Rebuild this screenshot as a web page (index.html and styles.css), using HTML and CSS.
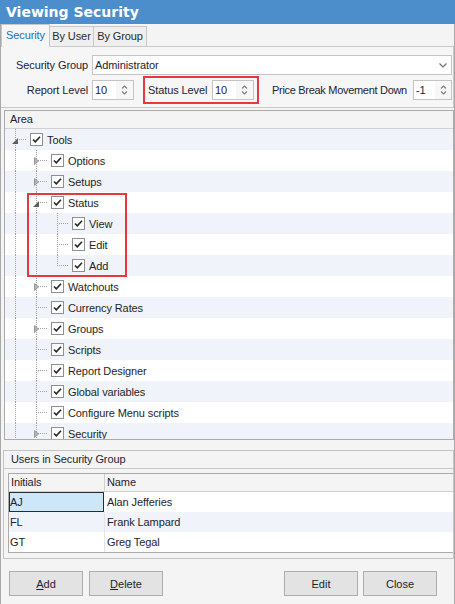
FILE: index.html
```html
<!DOCTYPE html>
<html>
<head>
<meta charset="utf-8">
<link rel="stylesheet" href="styles.css">
</head>
<body>
<div class="window">
  <div class="titlebar">Viewing Security</div>
  <div class="tabs">
    <div class="tab active w1">Security</div>
    <div class="tab w2">By User</div>
    <div class="tab w3">By Group</div>
  </div>
  <div class="panel">
    <div class="frow">
      <span class="lbl">Security Group</span>
      <div class="combo"><span class="cval">Administrator</span><svg class="cchev" width="8" height="5" viewBox="0 0 8 5"><path d="M0.5 0.5 L4 4 L7.5 0.5" fill="none" stroke="#6e6e6e" stroke-width="1.2"/></svg></div>
    </div>
    <div class="frow frow2">
      <span class="lbl">Report Level</span>
      <div class="spin"><span class="sval">10</span><span class="sbtn"><svg width="7" height="12" viewBox="0 0 7 12"><path d="M1 4.5 L3.5 2 L6 4.5 M1 7.5 L3.5 10 L6 7.5" fill="none" stroke="#7a7a7a" stroke-width="1.1"/></svg></span></div>
      <div class="hlbox">
        <span class="lbl2">Status Level</span>
        <div class="spin"><span class="sval">10</span><span class="sbtn"><svg width="7" height="12" viewBox="0 0 7 12"><path d="M1 4.5 L3.5 2 L6 4.5 M1 7.5 L3.5 10 L6 7.5" fill="none" stroke="#7a7a7a" stroke-width="1.1"/></svg></span></div>
      </div>
      <span class="lbl3">Price Break Movement Down</span>
      <div class="spin spin-sm"><span class="sval">-1</span><span class="sbtn"><svg width="7" height="12" viewBox="0 0 7 12"><path d="M1 4.5 L3.5 2 L6 4.5 M1 7.5 L3.5 10 L6 7.5" fill="none" stroke="#7a7a7a" stroke-width="1.1"/></svg></span></div>
    </div>
  </div>

  <div class="grid">
    <div class="ghead">Area</div>
    <div class="tree">
      <div class="node alt"><span class="c v t"><svg class="exo" width="6" height="6" viewBox="0 0 6 6"><path d="M6 0 L6 6 L0 6 Z" fill="#5e5e5e"/></svg></span><span class="cb"></span><span class="nt">Tools</span></div>
      <div class="node"><span class="c v"></span><span class="c v t"><svg class="exc" width="5" height="8" viewBox="0 0 5 8"><path d="M0.5 0.5 L4.5 4 L0.5 7.5 Z" fill="#b4b4b4" stroke="#8c8c8c" stroke-width="0.8"/></svg></span><span class="cb"></span><span class="nt">Options</span></div>
      <div class="node alt"><span class="c v"></span><span class="c v t"><svg class="exc" width="5" height="8" viewBox="0 0 5 8"><path d="M0.5 0.5 L4.5 4 L0.5 7.5 Z" fill="#b4b4b4" stroke="#8c8c8c" stroke-width="0.8"/></svg></span><span class="cb"></span><span class="nt">Setups</span></div>
      <div class="node"><span class="c v"></span><span class="c v t"><svg class="exo" width="6" height="6" viewBox="0 0 6 6"><path d="M6 0 L6 6 L0 6 Z" fill="#5e5e5e"/></svg></span><span class="cb"></span><span class="nt">Status</span></div>
      <div class="node alt"><span class="c v"></span><span class="c v"></span><span class="c v t"></span><span class="cb"></span><span class="nt">View</span></div>
      <div class="node"><span class="c v"></span><span class="c v"></span><span class="c v t"></span><span class="cb"></span><span class="nt">Edit</span></div>
      <div class="node alt"><span class="c v"></span><span class="c v"></span><span class="c e t"></span><span class="cb"></span><span class="nt">Add</span></div>
      <div class="node"><span class="c v"></span><span class="c v t"><svg class="exc" width="5" height="8" viewBox="0 0 5 8"><path d="M0.5 0.5 L4.5 4 L0.5 7.5 Z" fill="#b4b4b4" stroke="#8c8c8c" stroke-width="0.8"/></svg></span><span class="cb"></span><span class="nt">Watchouts</span></div>
      <div class="node alt"><span class="c v"></span><span class="c v t"></span><span class="cb"></span><span class="nt">Currency Rates</span></div>
      <div class="node"><span class="c v"></span><span class="c v t"><svg class="exc" width="5" height="8" viewBox="0 0 5 8"><path d="M0.5 0.5 L4.5 4 L0.5 7.5 Z" fill="#b4b4b4" stroke="#8c8c8c" stroke-width="0.8"/></svg></span><span class="cb"></span><span class="nt">Groups</span></div>
      <div class="node alt"><span class="c v"></span><span class="c v t"></span><span class="cb"></span><span class="nt">Scripts</span></div>
      <div class="node"><span class="c v"></span><span class="c v t"></span><span class="cb"></span><span class="nt">Report Designer</span></div>
      <div class="node alt"><span class="c v"></span><span class="c v t"></span><span class="cb"></span><span class="nt">Global variables</span></div>
      <div class="node"><span class="c v"></span><span class="c v t"></span><span class="cb"></span><span class="nt">Configure Menu scripts</span></div>
      <div class="node alt"><span class="c v"></span><span class="c v t"><svg class="exc" width="5" height="8" viewBox="0 0 5 8"><path d="M0.5 0.5 L4.5 4 L0.5 7.5 Z" fill="#b4b4b4" stroke="#8c8c8c" stroke-width="0.8"/></svg></span><span class="cb"></span><span class="nt">Security</span></div>
      <div class="treehl"></div>
    </div>
  </div>

  <div class="ugroup">
    <div class="uhead">Users in Security Group</div>
    <div class="uwrap">
      <div class="utable">
        <div class="urow uhdr"><span class="ci">Initials</span><span class="cn">Name</span></div>
        <div class="urow"><span class="ci sel">AJ</span><span class="cn">Alan Jefferies</span></div>
        <div class="urow alt"><span class="ci">FL</span><span class="cn">Frank Lampard</span></div>
        <div class="urow"><span class="ci">GT</span><span class="cn">Greg Tegal</span></div>
      </div>
    </div>
  </div>

  <div class="buttons">
    <button class="btn"><u>A</u>dd</button>
    <button class="btn"><u>D</u>elete</button>
    <button class="btn push">Edit</button>
    <button class="btn">Close</button>
  </div>
</div>
</body>
</html>
```

FILE: styles.css
```css
* { box-sizing: border-box; }
html, body { margin: 0; padding: 0; }
body {
  width: 455px;
  height: 604px;
  overflow: hidden;
  font-family: "Liberation Sans", Arial, sans-serif;
  font-size: 11px;
  color: #1e2230;
  letter-spacing: -0.1px;
}
.window {
  width: 455px;
  height: 604px;
  background: #f4f4f4;
  border-left: 1px solid #a8a8a8;
  border-right: 1px solid #a8a8a8;
  display: flex;
  flex-direction: column;
}
.titlebar {
  height: 24px;
  flex: none;
  background: #4b8ecb;
  color: #fff;
  font-family: "DejaVu Sans", sans-serif;
  font-weight: bold;
  font-size: 14px;
  letter-spacing: 0;
  line-height: 24px;
  padding-left: 6px;
  margin-left: -1px;
  margin-right: -1px;
}
.tabs {
  height: 22px;
  flex: none;
  display: flex;
  align-items: flex-start;
  padding-left: 0;
}
.tab {
  margin-top: 2px;
  height: 20px;
  line-height: 18px;
  text-align: center;
  background: #efefef;
  border-top: 1px solid #c8c8c8;
  border-right: 1px solid #c8c8c8;
  color: #2a2a2a;
}
.tab.active {
  margin-top: 0;
  height: 23px;
  line-height: 21px;
  background: #f6f6f6;
  border-left: 1px solid #c8c8c8;
  color: #1c6fc0;
  position: relative;
  z-index: 1;
}
.w1 { width: 49px; }
.w2 { width: 44px; }
.w3 { width: 53px; }

.panel {
  flex: none;
  border: 1px solid #c8c8c8;
  border-left: none;
  background: #f6f6f6;
  padding: 8px 1px 3px 0;
  margin-right: 0;
}
.frow {
  display: flex;
  align-items: center;
  height: 20px;
}
.frow2 {
  height: 28px;
  margin-top: 1px;
}
.lbl {
  width: 87px;
  flex: none;
  text-align: right;
  margin-right: 4px;
}
.combo {
  flex: 1;
  height: 20px;
  background: #fff;
  border: 1px solid #c4c4c4;
  display: flex;
  align-items: center;
  padding-left: 2px;
  padding-right: 4px;
}
.cval { flex: 1; }
.spin {
  width: 42px;
  height: 20px;
  flex: none;
  background: #fff;
  border: 1px solid #c4c4c4;
  display: flex;
  align-items: stretch;
}
.sval {
  flex: 1;
  padding-left: 2px;
  line-height: 18px;
}
.sbtn {
  width: 17px;
  background: #f7f7f7;
  display: flex;
  align-items: center;
  justify-content: center;
}
.spin-sm { width: 39px; }
.spin-sm .sbtn { width: 16px; }
.hlbox {
  margin-left: 9px;
  height: 28px;
  border: 2px solid #e5393f;
  display: flex;
  align-items: center;
  padding: 0 3px 0 3px;
}
.lbl2 { margin-right: 4px; width: 60px; }
.lbl3 {
  margin-left: 13px;
  margin-right: 4px;
  letter-spacing: -0.3px;
  white-space: nowrap;
  flex: 1;
}

.grid {
  flex: none;
  margin: 2px 0 0 3px;
  border: 1px solid #ababab;
  background: #fff;
}
.ghead {
  height: 18px;
  background: #f4f4f4;
  border-bottom: 1px solid #d0d0d0;
  padding-left: 5px;
  line-height: 17px;
}
.tree {
  height: 310px;
  overflow: hidden;
  position: relative;
}
.node {
  height: 21px;
  display: flex;
  align-items: center;
  background: #fff;
}
.node.alt { background: #f0f4fa; }
.c {
  width: 21px;
  height: 21px;
  flex: none;
  display: flex;
  align-items: center;
  background-repeat: no-repeat;
}
.v {
  background-image: repeating-linear-gradient(to bottom, #a2a2a2 0 1px, transparent 1px 2px);
  background-size: 1px 21px;
  background-position: 10px 0;
}
.v.t {
  background-image:
    repeating-linear-gradient(to bottom, #a2a2a2 0 1px, transparent 1px 2px),
    repeating-linear-gradient(to right, #a2a2a2 0 1px, transparent 1px 2px);
  background-size: 1px 21px, 11px 1px;
  background-position: 10px 0, 10px 10px;
}
.e.t {
  background-image:
    repeating-linear-gradient(to bottom, #a2a2a2 0 1px, transparent 1px 2px),
    repeating-linear-gradient(to right, #a2a2a2 0 1px, transparent 1px 2px);
  background-size: 1px 11px, 11px 1px;
  background-position: 10px 0, 10px 10px;
}
.exo { margin-left: 7px; margin-top: 2px; }
.exc { margin-left: 8px; }
.cb {
  width: 13px;
  height: 13px;
  flex: none;
  margin-left: 4px;
  border: 1px solid #8f8f8f;
  background: #fff url("data:image/svg+xml,%3Csvg xmlns='http://www.w3.org/2000/svg' width='11' height='11' viewBox='0 0 11 11'%3E%3Cpath d='M2 5.5 L4.3 7.8 L9 2.8' fill='none' stroke='%23262626' stroke-width='1.6'/%3E%3C/svg%3E") no-repeat center;
}
.nt {
  margin-left: 4px;
  white-space: nowrap;
  color: #1e1e24;
}
.treehl {
  position: absolute;
  left: 22px;
  top: 64px;
  width: 100px;
  height: 84px;
  border: 2px solid #e5393f;
}

.ugroup {
  flex: none;
  margin: 10px 0 0 2px;
  border: 1px solid #c4c4c4;
  background: #f4f4f4;
}
.uhead {
  height: 18px;
  border-bottom: 1px solid #c8c8c8;
  padding-left: 7px;
  line-height: 17px;
}
.uwrap {
  padding: 4px 0 5px 4px;
}
.utable {
  border: 1px solid #ababab;
  border-right: none;
  background: #fff;
}
.urow {
  display: flex;
  height: 20px;
  line-height: 20px;
}
.urow.alt { background: #f0f4fa; }
.urow.uhdr {
  height: 18px;
  line-height: 17px;
  background: #f4f4f4;
  border-bottom: 1px solid #d0d0d0;
}
.ci {
  width: 96px;
  flex: none;
  padding-left: 1px;
  border-right: 1px solid #e4e4e4;
}
.uhdr .ci { border-right-color: #d0d0d0; padding-left: 2px; }
.cn { flex: 1; padding-left: 2px; }
.ci.sel {
  background: #cde6f8;
  border: 1px solid #2e2a26;
  width: 95px;
  line-height: 18px;
  margin-right: 1px;
  padding-left: 0;
}

.buttons {
  flex: none;
  display: flex;
  gap: 6px;
  margin-top: 12px;
  padding: 0 17px 0 8px;
}
.btn {
  width: 74px;
  height: 25px;
  border: 1px solid #adadad;
  background: #e3e3e3;
  font-family: "Liberation Sans", Arial, sans-serif;
  font-size: 11px;
  color: #1e2230;
  padding: 0;
}
.btn.push { margin-left: auto; margin-right: -1px; }
```
